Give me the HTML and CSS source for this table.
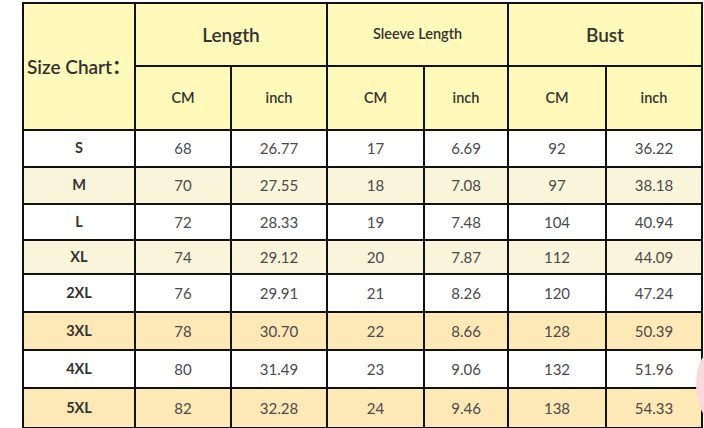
FILE: index.html
```html
<!DOCTYPE html>
<html>
<head>
<meta charset="utf-8">
<link rel="stylesheet" href="styles.css">
</head>
<body>
<div class="page">
<table class="chart">
  <colgroup>
    <col class="c0"><col class="c1"><col class="c2"><col class="c3"><col class="c4"><col class="c5"><col class="c6">
  </colgroup>
  <thead>
    <tr class="h1">
      <th rowspan="2" class="title">Size Chart：</th>
      <th colspan="2" class="big">Length</th>
      <th colspan="2" class="mid">Sleeve Length</th>
      <th colspan="2" class="big">Bust</th>
    </tr>
    <tr class="h2">
      <th>CM</th><th>inch</th><th>CM</th><th>inch</th><th>CM</th><th>inch</th>
    </tr>
  </thead>
  <tbody>
    <tr class="r white ra"><th>S</th><td>68</td><td>26.77</td><td>17</td><td>6.69</td><td>92</td><td>36.22</td></tr>
    <tr class="r cream ra"><th>M</th><td>70</td><td>27.55</td><td>18</td><td>7.08</td><td>97</td><td>38.18</td></tr>
    <tr class="r white rb"><th>L</th><td>72</td><td>28.33</td><td>19</td><td>7.48</td><td>104</td><td>40.94</td></tr>
    <tr class="r cream rc"><th>XL</th><td>74</td><td>29.12</td><td>20</td><td>7.87</td><td>112</td><td>44.09</td></tr>
    <tr class="r white rd"><th>2XL</th><td>76</td><td>29.91</td><td>21</td><td>8.26</td><td>120</td><td>47.24</td></tr>
    <tr class="r peach rd"><th>3XL</th><td>78</td><td>30.70</td><td>22</td><td>8.66</td><td>128</td><td>50.39</td></tr>
    <tr class="r white rd"><th>4XL</th><td>80</td><td>31.49</td><td>23</td><td>9.06</td><td>132</td><td>51.96</td></tr>
    <tr class="r peach re"><th>5XL</th><td>82</td><td>32.28</td><td>24</td><td>9.46</td><td>138</td><td>54.33</td></tr>
  </tbody>
</table>
<div class="blob"></div>
</div>
</body>
</html>
```
FILE: styles.css
```css
html, body {
  margin: 0;
  padding: 0;
  background: #ffffff;
}
.page {
  position: relative;
  width: 704px;
  height: 428px;
  overflow: hidden;
  padding: 2px 0 0 22px;
  box-sizing: border-box;
}
.chart {
  border-collapse: collapse;
  table-layout: fixed;
  width: 679px;
  font-family: "Lato", "Noto Sans CJK SC", sans-serif;
}
.c0 { width: 112px; }
.c1 { width: 96px; }
.c2 { width: 96px; }
.c3 { width: 97px; }
.c4 { width: 84px; }
.c5 { width: 98px; }
.c6 { width: 96px; }
.chart th, .chart td {
  border: 2px solid #111;
  text-align: center;
  vertical-align: middle;
  padding: 0;
  line-height: 1;
}
thead th {
  background: #fffab9;
  color: #333;
  font-weight: 600;
}
.h1 { height: 63px; }
.h2 { height: 64px; }
.h2 th { font-size: 14.5px; font-weight: 600; padding-top: 0; }
.title {
  text-align: left;
  padding-left: 3px;
  font-size: 19px;
  white-space: nowrap;
}
.big { font-size: 19px; }
.mid { font-size: 14.5px; }
.ra { height: 37px; }
.rb { height: 36px; }
.rc { height: 34px; }
.rd { height: 38px; }
.re { height: 40px; }
tbody th {
  font-size: 14.5px;
  font-weight: 700;
  color: #333;
}
tbody td {
  font-size: 15px;
  font-weight: 400;
  color: #4a4a4a;
}
.white th, .white td { background: #ffffff; }
.cream th, .cream td { background: #f8f5da; }
.peach th, .peach td { background: #fde9b6; }
.blob {
  position: absolute;
  left: 696px;
  top: 348px;
  width: 40px;
  height: 74px;
  border-radius: 50%;
  background: #f9d8de;
}
```
